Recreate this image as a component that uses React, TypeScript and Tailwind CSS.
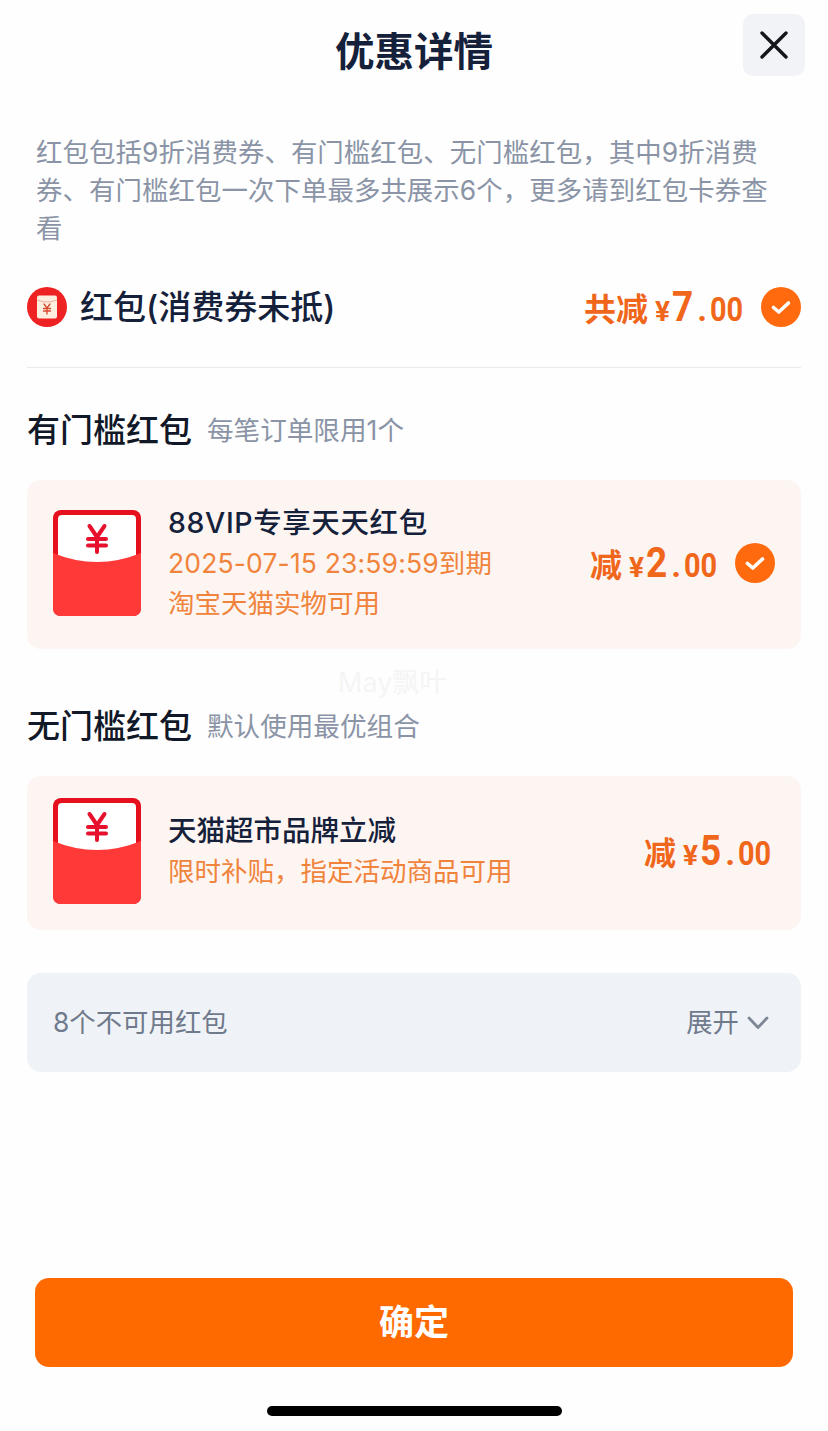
const cjk = "font-['Inter','Noto_Sans_CJK_SC',sans-serif]";

function Check({ size = 40 }: { size?: number }) {
  return (
    <svg width={size} height={size} viewBox="0 0 40 40" className="shrink-0">
      <circle cx="20" cy="20" r="20" fill="#ff6a0f" />
      <path d="M12.5 20.5 L17.8 25 L27.5 16" fill="none" stroke="#fff" strokeWidth="3.6" strokeLinecap="round" strokeLinejoin="round" />
    </svg>
  );
}

function Envelope() {
  return (
    <svg width="88" height="106" viewBox="0 0 88 106" className="shrink-0">
      <rect x="0" y="0" width="88" height="106" rx="8" fill="#e60f1e" />
      <path d="M5 9 Q5 5 9 5 H79 Q83 5 83 9 V58 H5 Z" fill="#fff" />
      <path d="M0 43 Q44 61 88 43 V98 Q88 106 80 106 H8 Q0 106 0 98 Z" fill="#ff3838" />
      <path d="M36.5 16 L44 27 L51.5 16 M35 29 H53 M35 35.5 H53 M44 27 V42" fill="none" stroke="#e8112d" strokeWidth="4" strokeLinecap="round" strokeLinejoin="round" />
    </svg>
  );
}

function SmallEnvelope() {
  return (
    <svg width="40" height="40" viewBox="0 0 40 40" className="shrink-0">
      <circle cx="20" cy="20" r="20" fill="#ee2222" />
      <rect x="10" y="8.5" width="20" height="23" rx="2" fill="#fdeee0" />
      <path d="M10 13 Q20 17 30 13" fill="none" stroke="#e8a08c" strokeWidth="0.8" />
      <path d="M17 17 L20 21 L23 17 M16.5 21.5 H23.5 M16.5 24 H23.5 M20 21 V27" fill="none" stroke="#d9482c" strokeWidth="1.3" strokeLinecap="round" />
    </svg>
  );
}

function Price({ prefix, big, className }: { prefix: string; big: string; className?: string }) {
  return (
    <div className={`flex items-baseline pt-[6px] text-[#f0661a] font-['Roboto','Noto_Sans_CJK_SC',sans-serif] ${className ?? ""}`}>
      <span className="text-[32px] font-semibold mr-[7px]">{prefix}</span>
      <span className="text-[28px] font-bold mr-[2px]">¥</span>
      <span className="inline-block w-[21px] origin-left scale-x-[0.88] text-[42px] font-bold leading-none mr-[4px]">{big}</span>
      <span className="text-[34px] font-bold leading-none mr-[3px]">.</span>
      <span className="inline-block w-[33px] origin-left scale-x-[0.85] text-[34px] font-bold leading-none">00</span>
    </div>
  );
}

function SectionHead({ title, sub }: { title: string; sub: string }) {
  return (
    <div className="flex items-center h-[44px]">
      <span className="text-[33px] font-medium text-[#111827] leading-none">{title}</span>
      <span className="ml-[15px] text-[26.6px] text-[#8a94a6] leading-none">{sub}</span>
    </div>
  );
}

export default function App() {
  return (
    <div className={`relative flex flex-col h-[1431px] w-[828px] bg-[#fefefe] overflow-hidden ${cjk}`}>
      <header className="relative flex justify-center shrink-0 h-[100px] pt-[23px]">
        <h1 className="text-[39.5px] font-semibold leading-[58px] text-[#15213a]">优惠详情</h1>
        <button className="absolute right-[23px] top-[14px] w-[62px] h-[62px] rounded-[10px] bg-[#f1f3f6] flex items-center justify-center">
          <svg width="28" height="28" viewBox="0 0 28 28">
            <path d="M2 2 L26 26 M26 2 L2 26" stroke="#14161c" strokeWidth="3.4" strokeLinecap="round" />
          </svg>
        </button>
      </header>

      <p className="mt-[33px] ml-[36px] w-[740px] text-[26.4px] leading-[38px] text-[#8a94a6] tracking-[0.1px]">
        红包包括9折消费券、有门槛红包、无门槛红包，其中9折消费券、有门槛红包一次下单最多共展示6个，更多请到红包卡券查看
      </p>

      <div className="mx-[27px] mt-[20px] flex items-center border-b border-[#e8eaee] pb-[40px] pt-[20px] box-content h-[40px]">
        <SmallEnvelope />
        <span className="ml-[13px] text-[33px] font-medium text-[#15213a] leading-none">红包(消费券未抵)</span>
        <div className="ml-auto flex items-center gap-[18px]">
          <Price prefix="共减" big="7" />
          <Check />
        </div>
      </div>

      <div className="mx-[27px] mt-[40px]">
        <SectionHead title="有门槛红包" sub="每笔订单限用1个" />
        <div className="mt-[28px] h-[169px] rounded-[14px] bg-[#fdf5f2] flex items-center pl-[26px] pr-[26px] pb-[4px]">
          <Envelope />
          <div className="ml-[27px] flex flex-col text-[26.5px] leading-[40px] text-[#f0843c]">
            <span className="text-[#15213a] font-medium text-[28.5px] tracking-[0.6px]">88VIP专享天天红包</span>
            <span className="tracking-[0.15px]">2025-07-15 23:59:59到期</span>
            <span>淘宝天猫实物可用</span>
          </div>
          <div className="ml-auto flex items-center gap-[18px]">
            <Price prefix="减" big="2" />
            <Check />
          </div>
        </div>
      </div>

      <div className="mx-[27px] mt-[55px]">
        <SectionHead title="无门槛红包" sub="默认使用最优组合" />
        <div className="mt-[28px] h-[154px] rounded-[14px] bg-[#fdf5f2] flex items-center pl-[26px] pr-[30px] pb-[4px]">
          <Envelope />
          <div className="ml-[27px] flex flex-col text-[26.5px] leading-[40px] text-[#f0843c]">
            <span className="text-[#15213a] font-medium text-[28.5px]">天猫超市品牌立减</span>
            <span>限时补贴，指定活动商品可用</span>
          </div>
          <Price prefix="减" big="5" className="ml-auto" />
        </div>
      </div>

      <div className="mx-[27px] mt-[43px] h-[99px] rounded-[14px] bg-[#eff3f7] flex items-center pl-[26px] pr-[32px] text-[26.4px] text-[#6f7a8c]">
        <span>8个不可用红包</span>
        <span className="ml-auto">展开</span>
        <svg width="22" height="14" viewBox="0 0 22 14" className="ml-[8px]">
          <path d="M2 2 L11 11.5 L20 2" fill="none" stroke="#7d8795" strokeWidth="2.8" strokeLinecap="round" strokeLinejoin="round" />
        </svg>
      </div>

      <button className="mt-auto mx-[35px] h-[89px] shrink-0 rounded-[14px] bg-[#ff6a00] text-white text-[35px] font-bold">
        确定
      </button>
      <div className="mt-[39px] mb-[15px] mx-auto w-[295px] h-[10px] shrink-0 rounded-full bg-black" />

      <span className="absolute left-[338px] top-[666px] text-[27px] leading-[34px] text-[#f5f5f5] pointer-events-none">May飘叶</span>
    </div>
  );
}
